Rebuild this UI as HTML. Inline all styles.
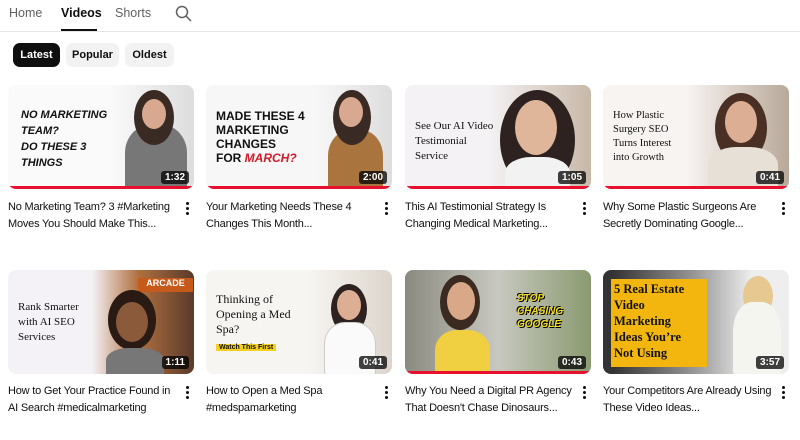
<!DOCTYPE html>
<html><head><meta charset="utf-8"><style>
*{margin:0;padding:0;box-sizing:border-box}
body{width:800px;height:440px;background:#fff;font-family:"Liberation Sans",Arial,sans-serif;position:relative;overflow:hidden;color:#0f0f0f}
.tab{position:absolute;top:6px;font-size:12.5px;color:#606060}
.hr{position:absolute;top:31px;left:0;width:800px;height:1px;background:#e5e5e5}
.chip{position:absolute;top:43px;height:24px;border-radius:7px;background:#f2f2f2;font-size:11px;font-weight:bold;line-height:24px;text-align:center}
.th{position:absolute;width:186px;height:104px;border-radius:8px;overflow:hidden;background:#f0f0f0}
.dur{position:absolute;right:5px;bottom:5px;background:rgba(0,0,0,.75);color:#fff;font-size:10px;font-weight:bold;padding:1px 4px;border-radius:3px}
.bar{position:absolute;left:0;bottom:0;height:3px;width:100%;background:#e8112d}
.t{position:absolute;font-size:11px;line-height:17px;width:190px;white-space:nowrap;color:#0f0f0f;letter-spacing:-0.2px}
.dots{position:absolute;width:3px}
.dots i{display:block;width:3px;height:3px;border-radius:50%;background:#0f0f0f;margin-bottom:2px}
.p{position:absolute;border-radius:40% 40% 10% 10%}
.h{position:absolute;border-radius:50%}
.tx{position:absolute;font-weight:bold;color:#111}
</style></head><body>
<div class="tab" style="left:9px">Home</div>
<div class="tab" style="left:61px;color:#0f0f0f;font-weight:bold">Videos</div>
<div style="position:absolute;left:61px;top:29px;width:36px;height:2px;background:#0f0f0f"></div>
<div class="tab" style="left:115px">Shorts</div>
<svg style="position:absolute;left:175px;top:5px" width="17" height="17" viewBox="0 0 17 17"><circle cx="7" cy="7" r="5.5" fill="none" stroke="#606060" stroke-width="1.5"/><path d="M11 11l5 5" stroke="#606060" stroke-width="1.5"/></svg>
<div class="hr"></div>
<div class="chip" style="left:13px;width:47px;background:#0f0f0f;color:#fff">Latest</div>
<div class="chip" style="left:66px;width:53px">Popular</div>
<div class="chip" style="left:125px;width:49px">Oldest</div>

<!-- row 1 -->
<div class="th" style="left:8px;top:85px;background:linear-gradient(90deg,#fafafa 55%,#ddd)">
<div class="tx" style="left:13px;top:22px;font-size:11px;line-height:16px;font-style:italic">NO MARKETING<br>TEAM?<br>DO THESE 3<br>THINGS</div>
<div class="p" style="left:117px;top:40px;width:62px;height:70px;background:#777"></div>
<div class="h" style="left:126px;top:5px;width:40px;height:55px;background:#3a2a24"></div>
<div class="h" style="left:134px;top:14px;width:24px;height:30px;background:#d9a890"></div>
<div class="bar"></div><div class="dur">1:32</div></div>
<div class="th" style="left:206px;top:85px;background:linear-gradient(90deg,#f7f7f7 60%,#ddd)">
<div class="tx" style="left:10px;top:24px;font-size:12px;line-height:14px">MADE THESE 4<br>MARKETING<br>CHANGES<br>FOR <span style="color:#d21a2a;font-style:italic">MARCH?</span></div>
<div class="p" style="left:122px;top:45px;width:55px;height:65px;background:#a9743e"></div>
<div class="h" style="left:127px;top:5px;width:38px;height:55px;background:#3a2a24"></div>
<div class="h" style="left:133px;top:12px;width:24px;height:30px;background:#d9a890"></div>
<div class="bar"></div><div class="dur">2:00</div></div>
<div class="th" style="left:405px;top:85px;background:linear-gradient(90deg,#f4f2f4 45%,#c8b8a8)">
<div class="tx" style="left:10px;top:34px;font-family:'Liberation Serif',serif;font-weight:normal;font-size:11px;line-height:15px">See Our AI Video<br>Testimonial<br>Service</div>
<div class="h" style="left:95px;top:5px;width:75px;height:100px;background:#2e2220"></div>
<div class="h" style="left:110px;top:15px;width:42px;height:55px;background:#e0b69a"></div>
<div class="p" style="left:100px;top:72px;width:65px;height:40px;background:#f2f2f2"></div>
<div class="bar" style="width:100%"></div><div class="dur">1:05</div></div>
<div class="th" style="left:603px;top:85px;background:linear-gradient(90deg,#f8f4f2 45%,#b8a898)">
<div class="tx" style="left:10px;top:24px;font-family:'Liberation Serif',serif;font-weight:normal;font-size:10.5px;line-height:14px">How Plastic<br>Surgery SEO<br>Turns Interest<br>into Growth</div>
<div class="h" style="left:112px;top:8px;width:52px;height:70px;background:#4a3024"></div>
<div class="h" style="left:122px;top:16px;width:32px;height:42px;background:#dcae94"></div>
<div class="p" style="left:105px;top:62px;width:70px;height:45px;background:#e6e0d6"></div>
<div class="bar"></div><div class="dur">0:41</div></div>

<div class="t" style="left:8px;top:199px">No Marketing Team? 3 #Marketing<br>Moves You Should Make This...</div>
<div class="dots" style="left:186px;top:202px"><i></i><i></i><i></i></div>
<div class="t" style="left:206px;top:199px">Your Marketing Needs These 4<br>Changes This Month...</div>
<div class="dots" style="left:385px;top:202px"><i></i><i></i><i></i></div>
<div class="t" style="left:405px;top:199px">This AI Testimonial Strategy Is<br>Changing Medical Marketing...</div>
<div class="dots" style="left:583px;top:202px"><i></i><i></i><i></i></div>
<div class="t" style="left:603px;top:199px">Why Some Plastic Surgeons Are<br>Secretly Dominating Google...</div>
<div class="dots" style="left:782px;top:202px"><i></i><i></i><i></i></div>

<!-- row 2 -->
<div class="th" style="left:8px;top:270px;background:linear-gradient(90deg,#f4f2f6 45%,#b07040 70%,#5a3a2a)">
<div class="tx" style="left:10px;top:30px;font-family:'Liberation Serif',serif;font-weight:normal;font-size:11px;line-height:15px">Rank Smarter<br>with AI SEO<br>Services</div>
<div style="position:absolute;left:130px;top:8px;width:55px;height:14px;background:#c55a1a;color:#fff;font-size:9px;font-weight:bold;text-align:center">ARCADE</div>
<div class="h" style="left:100px;top:20px;width:48px;height:60px;background:#2a1a14"></div>
<div class="h" style="left:108px;top:32px;width:32px;height:40px;background:#8a5a3a"></div>
<div class="p" style="left:98px;top:78px;width:58px;height:30px;background:#777"></div>
<div class="dur">1:11</div></div>
<div class="th" style="left:206px;top:270px;background:linear-gradient(90deg,#f7f5f2 55%,#ddd5cc)">
<div class="tx" style="left:10px;top:22px;font-family:'Liberation Serif',serif;font-weight:normal;font-size:12px;line-height:15px">Thinking of<br>Opening a Med<br>Spa?</div>
<div style="position:absolute;left:10px;top:74px;font-size:7px;font-weight:bold;background:#f5d020;padding:0 3px">Watch This First</div>
<div class="h" style="left:125px;top:14px;width:36px;height:50px;background:#2e2220"></div>
<div class="h" style="left:131px;top:20px;width:24px;height:30px;background:#dcae94"></div>
<div class="p" style="left:118px;top:52px;width:52px;height:55px;background:#fafafa;border:1px solid #ccc"></div>
<div class="dur">0:41</div></div>
<div class="th" style="left:405px;top:270px;background:linear-gradient(90deg,#8a8a80,#c8c8c0 50%,#8a9a70)">
<div class="h" style="left:35px;top:5px;width:40px;height:55px;background:#3a2a20"></div>
<div class="h" style="left:42px;top:12px;width:28px;height:38px;background:#d8a888"></div>
<div class="p" style="left:30px;top:60px;width:55px;height:50px;background:#f0d040"></div>
<div class="tx" style="left:112px;top:22px;font-size:10px;line-height:13px;color:#f5e020;font-style:italic;text-shadow:1px 1px 0 #000,-1px -1px 0 #000">STOP<br>CHASING<br>GOOGLE</div>
<div class="bar"></div><div class="dur">0:43</div></div>
<div class="th" style="left:603px;top:270px;background:linear-gradient(90deg,#333 5%,#999 50%,#eee 80%)">
<div class="tx" style="left:8px;top:9px;width:96px;height:88px;background:#f3b60e;font-family:'Liberation Serif',serif;font-size:12.5px;line-height:16px;padding:2px 3px">5 Real Estate<br>Video<br>Marketing<br>Ideas You’re<br>Not Using</div>
<div class="h" style="left:140px;top:6px;width:30px;height:40px;background:#e6c890"></div>
<div class="p" style="left:130px;top:32px;width:48px;height:75px;background:#f5f5f0"></div>
<div class="dur">3:57</div></div>

<div class="t" style="left:8px;top:383px">How to Get Your Practice Found in<br>AI Search #medicalmarketing</div>
<div class="dots" style="left:186px;top:386px"><i></i><i></i><i></i></div>
<div class="t" style="left:206px;top:383px">How to Open a Med Spa<br>#medspamarketing</div>
<div class="dots" style="left:385px;top:386px"><i></i><i></i><i></i></div>
<div class="t" style="left:405px;top:383px">Why You Need a Digital PR Agency<br>That Doesn't Chase Dinosaurs...</div>
<div class="dots" style="left:583px;top:386px"><i></i><i></i><i></i></div>
<div class="t" style="left:603px;top:383px">Your Competitors Are Already Using<br>These Video Ideas...</div>
<div class="dots" style="left:782px;top:386px"><i></i><i></i><i></i></div>
</body></html>
